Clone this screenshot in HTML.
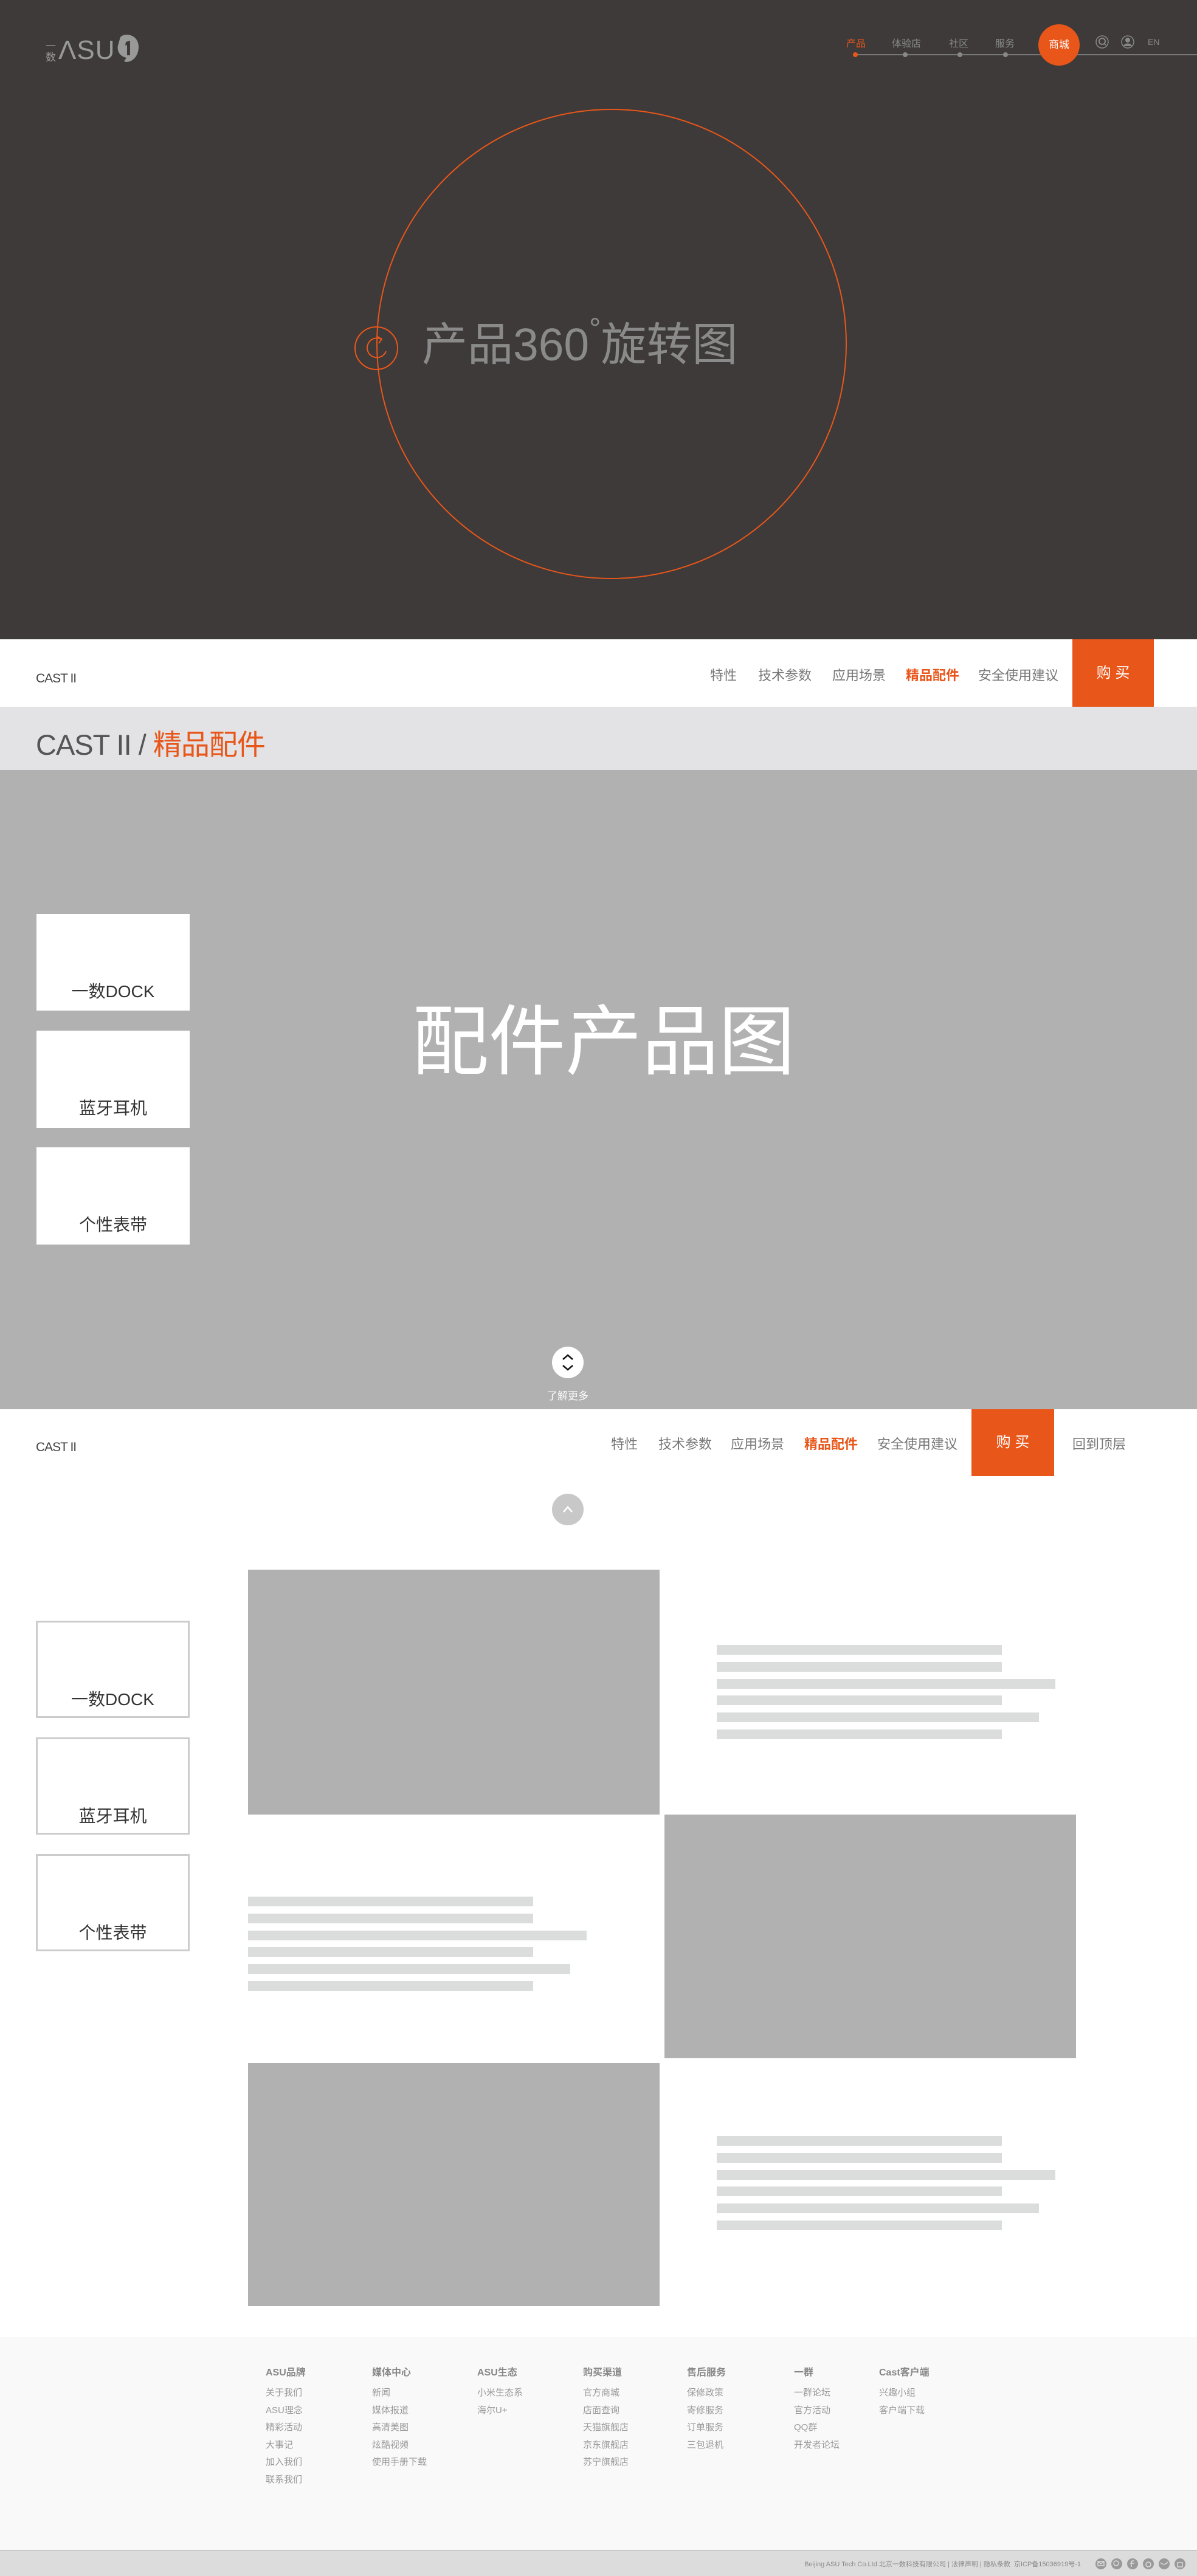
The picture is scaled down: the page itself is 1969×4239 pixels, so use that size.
<!DOCTYPE html>
<html><head><meta charset="utf-8"><style>
*{margin:0;padding:0;box-sizing:border-box}
body{width:1969px;height:4239px;position:relative;background:#fff;font-family:"Liberation Sans","Noto Sans CJK SC",sans-serif;overflow:hidden}
.a{position:absolute;white-space:nowrap}
.gl{position:absolute;background:#dbdcdc;height:16px}
.img{position:absolute;background:#b1b1b2}
.fh{position:absolute;font-size:16px;font-weight:bold;color:#888}
.fi{position:absolute;font-size:15px;color:#999;line-height:28.5px}
</style></head><body>
<!-- hero -->
<div class="a" style="left:0;top:0;width:1969px;height:1052px;background:#3e3a39"></div>
<div class="a" style="left:75px;top:68px;font-size:17px;color:#999;line-height:18px;width:20px;white-space:normal">一<br>数</div>
<div class="a" style="left:96px;top:56px;font-size:44px;color:#999;letter-spacing:1px;line-height:54px">ΛSU</div>
<svg class="a" style="left:190px;top:55px" width="42" height="52" viewBox="0 0 42 52"><path d="M8 6 C16 -2 38 2 38 22 C38 40 24 50 14 46 L18 40 C8 38 2 30 4 20 Z" fill="#999"/><path d="M17 14 L24 12 L24 36 L19 36 L19 19 L16 20 Z" fill="#3e3a39"/></svg>
<div class="a" style="left:1392px;top:58px;font-size:16px;color:#e8561a">产品</div>
<div class="a" style="left:1467px;top:58px;font-size:16px;color:#8a8a8a">体验店</div>
<div class="a" style="left:1561px;top:58px;font-size:16px;color:#8a8a8a">社区</div>
<div class="a" style="left:1637px;top:58px;font-size:16px;color:#8a8a8a">服务</div>
<div class="a" style="left:1407px;top:89px;width:562px;height:2px;background:#777"></div>
<div class="a" style="left:1403px;top:86px;width:8px;height:8px;border-radius:50%;background:#e8561a"></div>
<div class="a" style="left:1485px;top:86px;width:8px;height:8px;border-radius:50%;background:#888"></div>
<div class="a" style="left:1575px;top:86px;width:8px;height:8px;border-radius:50%;background:#888"></div>
<div class="a" style="left:1650px;top:86px;width:8px;height:8px;border-radius:50%;background:#888"></div>
<div class="a" style="left:1708px;top:40px;width:68px;height:68px;border-radius:50%;background:#e8561a;color:#fff;font-size:17px;text-align:center;line-height:68px">商城</div>
<svg class="a" style="left:1801px;top:57px" width="24" height="24"><circle cx="12" cy="12" r="10" fill="none" stroke="#888" stroke-width="1.5"/><circle cx="12" cy="11" r="5" fill="none" stroke="#888" stroke-width="2"/><path d="M15 14 L18 17" stroke="#888" stroke-width="2"/></svg>
<svg class="a" style="left:1843px;top:57px" width="24" height="24"><circle cx="12" cy="12" r="10" fill="none" stroke="#888" stroke-width="1.5"/><circle cx="12" cy="9" r="4" fill="#888"/><path d="M5 19 C6 13 18 13 19 19 Z" fill="#888"/></svg>
<div class="a" style="left:1888px;top:61px;font-size:14px;color:#888">EN</div>
<svg class="a" style="left:0;top:0" width="1969" height="1052"><circle cx="1006" cy="566" r="386" fill="none" stroke="#e8561a" stroke-width="2"/><circle cx="619" cy="573" r="35" fill="none" stroke="#e8561a" stroke-width="2"/><path d="M627 558 A16 16 0 1 0 635 578" fill="none" stroke="#e8561a" stroke-width="2"/><path d="M621 554 L628 558 L623 565" fill="none" stroke="#e8561a" stroke-width="2"/></svg>
<div class="a" style="left:694px;top:492px;font-size:75px;color:#8a8a8a;line-height:100px">产品360<span style="font-size:48px;vertical-align:36px">°</span>旋转图</div>
<!-- subnav 1 -->
<div class="a" style="left:59px;top:1105px;font-size:21px;color:#444;letter-spacing:-1px">CAST II</div>
<div class="a" style="left:1168px;top:1094px;font-size:22px;color:#777">特性</div>
<div class="a" style="left:1247px;top:1094px;font-size:22px;color:#777">技术参数</div>
<div class="a" style="left:1369px;top:1094px;font-size:22px;color:#777">应用场景</div>
<div class="a" style="left:1490px;top:1094px;font-size:22px;color:#e8561a;font-weight:bold">精品配件</div>
<div class="a" style="left:1609px;top:1094px;font-size:22px;color:#777">安全使用建议</div>
<div class="a" style="left:1764px;top:1052px;width:134px;height:111px;background:#e8561a;color:#fff;font-size:24px;text-align:center;line-height:111px">购 买</div>
<div class="a" style="left:0;top:1163px;width:1969px;height:104px;background:#e3e3e5"></div>
<div class="a" style="left:59px;top:1187px;font-size:47px;color:#555;letter-spacing:-1px">CAST II / <span style="color:#e8561a">精品配件</span></div>
<!-- gray hero -->
<div class="a" style="left:0;top:1267px;width:1969px;height:1052px;background:#b1b1b2"></div>
<div class="a" style="left:60px;top:1504px;width:252px;height:159px;background:#fff;font-size:28px;color:#333;text-align:center;padding-top:106px">一数DOCK</div>
<div class="a" style="left:60px;top:1696px;width:252px;height:160px;background:#fff;font-size:28px;color:#333;text-align:center;padding-top:106px">蓝牙耳机</div>
<div class="a" style="left:60px;top:1888px;width:252px;height:160px;background:#fff;font-size:28px;color:#333;text-align:center;padding-top:106px">个性表带</div>
<div class="a" style="left:0;top:1635px;width:1986px;text-align:center;font-size:126px;color:#fff;line-height:160px">配件产品图</div>
<svg class="a" style="left:908px;top:2216px" width="52" height="52"><circle cx="26" cy="26" r="26" fill="#fff"/><path d="M18 21 L26 14 L34 21 M18 31 L26 38 L34 31" fill="none" stroke="#111" stroke-width="2.5"/></svg>
<div class="a" style="left:900px;top:2283px;font-size:17px;color:#fff">了解更多</div>
<!-- subnav 2 -->
<div class="a" style="left:59px;top:2370px;font-size:21px;color:#444;letter-spacing:-1px">CAST II</div>
<div class="a" style="left:1005px;top:2359px;font-size:22px;color:#777">特性</div>
<div class="a" style="left:1083px;top:2359px;font-size:22px;color:#777">技术参数</div>
<div class="a" style="left:1202px;top:2359px;font-size:22px;color:#777">应用场景</div>
<div class="a" style="left:1323px;top:2359px;font-size:22px;color:#e8561a;font-weight:bold">精品配件</div>
<div class="a" style="left:1443px;top:2359px;font-size:22px;color:#777">安全使用建议</div>
<div class="a" style="left:1598px;top:2319px;width:136px;height:110px;background:#e8561a;color:#fff;font-size:24px;text-align:center;line-height:110px">购 买</div>
<div class="a" style="left:1764px;top:2359px;font-size:22px;color:#777">回到顶层</div>
<svg class="a" style="left:908px;top:2458px" width="52" height="52"><circle cx="26" cy="26" r="26" fill="#c8c8c9"/><path d="M19 30 L26 22 L33 30" fill="none" stroke="#fff" stroke-width="2.5"/></svg>
<!-- content -->
<div class="a" style="left:59px;top:2667px;width:253px;height:160px;border:3px solid #ccc;font-size:28px;color:#333;text-align:center;padding-top:105px">一数DOCK</div>
<div class="a" style="left:59px;top:2859px;width:253px;height:160px;border:3px solid #ccc;font-size:28px;color:#333;text-align:center;padding-top:105px">蓝牙耳机</div>
<div class="a" style="left:59px;top:3051px;width:253px;height:160px;border:3px solid #ccc;font-size:28px;color:#333;text-align:center;padding-top:105px">个性表带</div>
<div class="img" style="left:408px;top:2583px;width:677px;height:403px"></div>
<div class="img" style="left:1093px;top:2986px;width:677px;height:401px"></div>
<div class="img" style="left:408px;top:3395px;width:677px;height:400px"></div>
<div class="gl" style="left:1179px;top:2707px;width:469px"></div>
<div class="gl" style="left:1179px;top:2735px;width:469px"></div>
<div class="gl" style="left:1179px;top:2763px;width:557px"></div>
<div class="gl" style="left:1179px;top:2790px;width:469px"></div>
<div class="gl" style="left:1179px;top:2818px;width:530px"></div>
<div class="gl" style="left:1179px;top:2846px;width:469px"></div>
<div class="gl" style="left:408px;top:3121px;width:469px"></div>
<div class="gl" style="left:408px;top:3149px;width:469px"></div>
<div class="gl" style="left:408px;top:3177px;width:557px"></div>
<div class="gl" style="left:408px;top:3204px;width:469px"></div>
<div class="gl" style="left:408px;top:3232px;width:530px"></div>
<div class="gl" style="left:408px;top:3260px;width:469px"></div>
<div class="gl" style="left:1179px;top:3515px;width:469px"></div>
<div class="gl" style="left:1179px;top:3543px;width:469px"></div>
<div class="gl" style="left:1179px;top:3571px;width:557px"></div>
<div class="gl" style="left:1179px;top:3598px;width:469px"></div>
<div class="gl" style="left:1179px;top:3626px;width:530px"></div>
<div class="gl" style="left:1179px;top:3654px;width:469px"></div>
<!-- footer -->
<div class="a" style="left:0;top:3846px;width:1969px;height:350px;background:#f9f9f9"></div>
<div class="fh" style="left:437px;top:3890px">ASU品牌</div>
<div class="fh" style="left:612px;top:3890px">媒体中心</div>
<div class="fh" style="left:785px;top:3890px">ASU生态</div>
<div class="fh" style="left:959px;top:3890px">购买渠道</div>
<div class="fh" style="left:1130px;top:3890px">售后服务</div>
<div class="fh" style="left:1306px;top:3890px">一群</div>
<div class="fh" style="left:1446px;top:3890px">Cast客户端</div>
<div class="fi" style="left:437px;top:3924px">关于我们<br>ASU理念<br>精彩活动<br>大事记<br>加入我们<br>联系我们</div>
<div class="fi" style="left:612px;top:3924px">新闻<br>媒体报道<br>高清美图<br>炫酷视频<br>使用手册下载</div>
<div class="fi" style="left:785px;top:3924px">小米生态系<br>海尔U+</div>
<div class="fi" style="left:959px;top:3924px">官方商城<br>店面查询<br>天猫旗舰店<br>京东旗舰店<br>苏宁旗舰店</div>
<div class="fi" style="left:1130px;top:3924px">保修政策<br>寄修服务<br>订单服务<br>三包退机</div>
<div class="fi" style="left:1306px;top:3924px">一群论坛<br>官方活动<br>QQ群<br>开发者论坛</div>
<div class="fi" style="left:1446px;top:3924px">兴趣小组<br>客户端下载</div>
<div class="a" style="left:0;top:4196px;width:1969px;height:43px;background:#dcdcdc;border-top:2px solid #c8c8c8"></div>
<div class="a" style="right:191px;top:4211px;font-size:11px;color:#888">Beijing ASU Tech Co.Ltd.北京一数科技有限公司 | 法律声明 | 隐私条款&nbsp; 京ICP备15036919号-1</div>
<svg class="a" style="left:1800px;top:4208px" width="160" height="22"><g fill="#999"><circle cx="11" cy="11" r="9"/><circle cx="37" cy="11" r="9"/><circle cx="63" cy="11" r="9"/><circle cx="89" cy="11" r="9"/><circle cx="115" cy="11" r="9"/><circle cx="141" cy="11" r="9"/></g><g fill="none" stroke="#dcdcdc" stroke-width="1.5"><rect x="6" y="7" width="10" height="7"/><path d="M6 7 L11 11 L16 7"/><circle cx="36" cy="10" r="4"/><path d="M65 6 L63 6 Q61 6 61 9 L61 16 M59 10 L66 10"/><circle cx="89" cy="12" r="4"/><path d="M109 9 Q115 15 121 8"/><rect x="137" y="9" width="8" height="7"/></g></svg>
</body></html>
